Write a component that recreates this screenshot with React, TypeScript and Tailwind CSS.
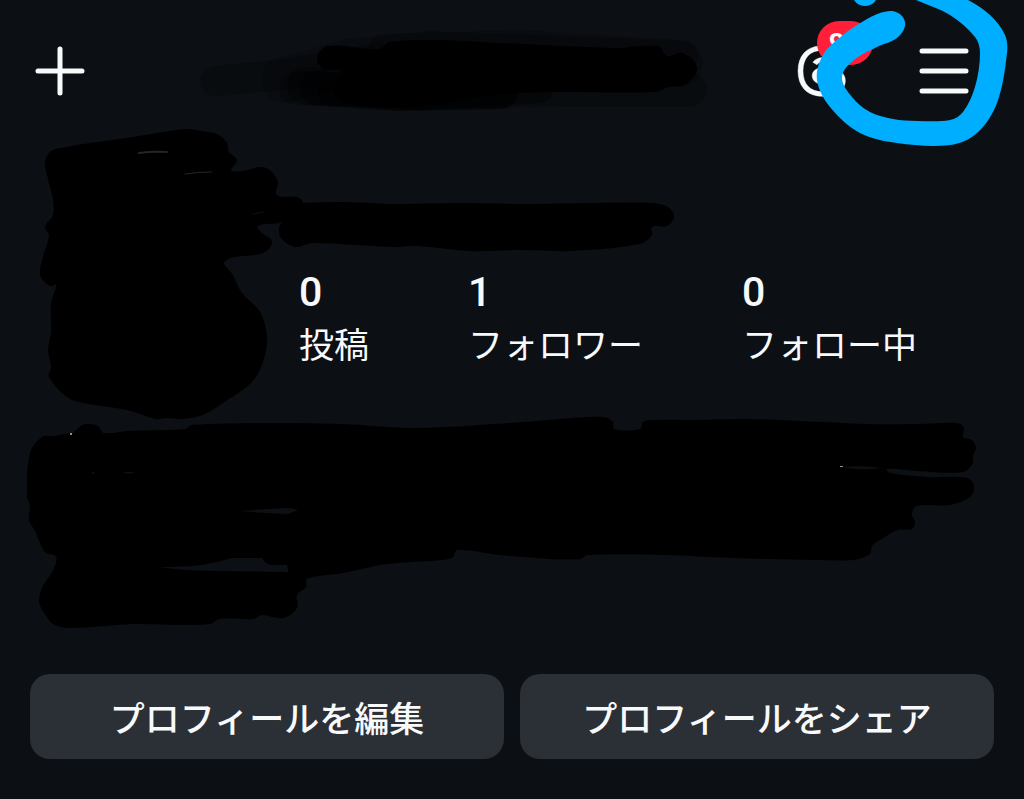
import React from "react";
import { FaThreads } from "react-icons/fa6";

type Point = [number, number];

/** Closed, slightly rounded outline through a list of points. */
function blob(points: Point[]): string {
  const n = points.length;
  let d = `M${points[0][0]} ${points[0][1]}`;
  for (let i = 0; i < n; i++) {
    const p0 = points[(i - 1 + n) % n];
    const p1 = points[i];
    const p2 = points[(i + 1) % n];
    const p3 = points[(i + 2) % n];
    const len = Math.hypot(p2[0] - p1[0], p2[1] - p1[1]);
    const a = Math.hypot(p2[0] - p0[0], p2[1] - p0[1]) || 1;
    const b = Math.hypot(p3[0] - p1[0], p3[1] - p1[1]) || 1;
    const k = len / 3;
    const c1 = [p1[0] + ((p2[0] - p0[0]) / a) * k, p1[1] + ((p2[1] - p0[1]) / a) * k];
    const c2 = [p2[0] - ((p3[0] - p1[0]) / b) * k, p2[1] - ((p3[1] - p1[1]) / b) * k];
    d += `C${c1[0].toFixed(1)} ${c1[1].toFixed(1)} ${c2[0].toFixed(1)} ${c2[1].toFixed(1)} ${p2[0]} ${p2[1]}`;
  }
  return d + "Z";
}

const TITLE: Point[] = [
  [317, 58], [328, 46], [379, 49], [390, 42], [438, 40], [500, 43], [614, 48], [658, 46], [667, 56],
  [682, 53], [697, 68], [686, 84], [669, 87], [655, 92], [510, 93], [431, 105], [376, 107], [342, 101],
  [333, 89], [342, 72], [324, 69],
];

const AVATAR: Point[] = [
  [45, 162], [51, 151], [67, 147], [90, 143], [133, 137], [163, 132], [190, 129], [202, 131], [217, 134],
  [227, 143], [229, 152], [237, 160], [232, 171], [263, 167], [273, 173], [278, 183], [277, 195],
  [297, 197], [303, 202], [306, 215], [280, 223], [258, 226], [262, 233], [272, 242], [263, 253],
  [225, 261], [233, 275], [242, 293], [260, 312], [267, 337], [263, 362], [252, 382], [223, 403],
  [203, 415], [183, 419], [167, 418], [155, 419], [127, 410], [83, 403], [67, 397], [49, 377], [51, 367],
  [48, 350], [51, 332], [51, 303], [56, 285], [50, 286], [40, 275], [43, 257], [49, 235], [45, 227],
  [53, 215], [53, 200], [47, 175],
];

const NAME: Point[] = [
  [290, 206], [303, 203], [350, 202], [393, 204], [457, 203], [530, 204], [590, 203], [650, 203],
  [668, 207], [674, 217], [667, 226], [652, 227], [652, 235], [640, 244], [570, 251], [523, 250],
  [470, 251], [417, 246], [393, 247], [313, 243], [295, 247], [281, 238], [279, 228], [282, 222],
];

const BIO: Point[] = [
  [27, 497], [30, 453], [42, 437], [53, 436], [70, 433], [73, 433], [82, 425], [90, 424], [98, 426],
  [104, 433], [127, 431], [185, 429], [192, 425], [260, 423], [343, 424], [413, 428], [510, 423],
  [560, 419], [603, 417], [613, 422], [614, 429], [640, 429], [643, 422], [653, 420], [693, 420],
  [747, 419], [800, 421], [867, 424], [917, 424], [957, 423], [964, 428], [963, 437], [972, 440],
  [976, 448], [973, 456], [973, 463], [963, 472], [917, 471], [887, 469], [890, 473], [927, 477],
  [967, 478], [974, 487], [970, 497], [950, 505], [917, 506], [912, 514], [915, 522], [912, 529],
  [898, 530], [880, 540], [872, 546], [870, 554], [853, 560], [817, 560], [733, 558], [667, 555],
  [588, 555], [580, 559], [550, 559], [500, 555], [457, 550], [453, 557], [443, 560], [387, 564],
  [343, 573], [307, 579], [306, 587], [297, 595], [297, 608], [283, 618], [262, 615], [253, 619],
  [220, 619], [210, 624], [183, 625], [133, 624], [70, 628], [53, 624], [45, 614], [39, 602], [42, 588],
  [53, 570], [56, 557], [45, 552], [35, 531], [29, 520], [30, 505],
];

const MARKER: Point[] = [
  [892, 11], [902, 16], [905, 26], [897, 38], [877, 47], [854, 60], [842, 77], [852, 97], [870, 112],
  [893, 119], [917, 121], [950, 120], [963, 112], [975, 87], [980, 53], [975, 37], [950, 15], [916, 0],
  [900, -8], [950, -8], [968, 0], [990, 15], [1005, 35], [1007, 53], [997, 103], [977, 133], [950, 145],
  [897, 143], [860, 133], [830, 107], [817, 80], [823, 55], [843, 35], [867, 19], [880, 13],
];

const STATS = [
  { value: "0", label: "投稿" },
  { value: "1", label: "フォロワー" },
  { value: "0", label: "フォロー中" },
];

const ACTIONS = ["プロフィールを編集", "プロフィールをシェア"];

function Header() {
  return (
    <header className="relative flex h-[126px] items-center justify-between pt-4 pr-[50px] pl-[30px]">
      <button type="button" aria-label="作成" className="size-[60px] shrink-0">
        <svg viewBox="0 0 60 60" className="size-full" stroke="#f8f9fb" strokeWidth="5" strokeLinecap="round">
          <path d="M8 30H52M30 8V52" />
        </svg>
      </button>

      <svg viewBox="173 24 540 94" className="h-[94px] w-[540px] min-w-0 overflow-visible" aria-hidden="true">
        <g fill="none" stroke="#000" strokeLinecap="round" strokeLinejoin="round">
          <path d="M216 81L290 74L380 58" strokeWidth="31" opacity=".22" />
          <path d="M284 80L350 62L430 54L680 64" strokeWidth="46" opacity=".2" />
          <path d="M296 88L420 92L560 90L690 90" strokeWidth="34" opacity=".22" />
          <path d="M306 86L400 92L500 90" strokeWidth="38" opacity=".3" />
          <path d="M316 88L400 94L500 92" strokeWidth="34" opacity=".4" />
          <path d="M330 92L420 97L540 90" strokeWidth="26" opacity=".4" />
          <path d="M384 50L520 46L682 56" strokeWidth="32" opacity=".2" />
        </g>
        <path d={blob(TITLE)} fill="#000" />
      </svg>

      <div className="flex shrink-0 items-center gap-[38px]">
        <button type="button" aria-label="Threads" className="relative flex h-[60px] w-20 items-center text-[#f8f9fb]">
          <FaThreads
            preserveAspectRatio="none"
            strokeWidth={4}
            stroke="currentColor"
            className="h-[54px] w-[54px] overflow-visible"
          />
          <span className="absolute -top-5 left-[21px] flex h-11 w-14 items-center justify-center rounded-full bg-[#ff1f38] font-['Liberation_Sans',sans-serif] text-[28px] leading-none font-bold">
            9+
          </span>
        </button>
        <button type="button" aria-label="メニュー" className="size-[60px]">
          <svg viewBox="0 0 60 60" className="size-full" stroke="#f8f9fb" strokeWidth="5" strokeLinecap="round">
            <path d="M8 10H52M8 30H52M8 50H52" />
          </svg>
        </button>
      </div>

      <svg
        viewBox="780 0 244 160"
        className="pointer-events-none absolute top-0 right-0 h-40 w-[244px]"
        fill="#00aeff"
        aria-hidden="true"
      >
        <path d={blob(MARKER)} />
        <circle cx="865" cy="-7" r="13" />
      </svg>
    </header>
  );
}

function Profile() {
  return (
    <section className="flex h-[294px] pl-10">
      <svg viewBox="40 126 239 294" className="h-[294px] w-[239px] shrink-0 overflow-visible" aria-hidden="true">
        <path d={blob(AVATAR)} fill="#000" />
        <g fill="none" stroke="#20262b" strokeLinecap="round">
          <path d="M139 153Q153 151 167 152" strokeWidth="2" />
          <path d="M185 174Q198 172 212 172" strokeWidth="1" />
          <path d="M253 214L263 212" stroke="#0c1014" strokeWidth="1" />
        </g>
      </svg>
      <div className="flex flex-col pt-[74px]">
        <svg viewBox="279 200 396 52" className="h-[52px] w-[396px] overflow-visible" aria-hidden="true">
          <path d={blob(NAME)} fill="#000" />
        </svg>
        <dl className="flex gap-[99px] pt-4 pl-5">
          {STATS.map((s) => (
            <div key={s.label} className="flex flex-col-reverse">
              <dt className="text-[35px] leading-[52px] whitespace-nowrap">{s.label}</dt>
              <dd className="font-[Roboto,sans-serif] text-[41px] leading-[49px] font-medium">{s.value}</dd>
            </div>
          ))}
        </dl>
      </div>
    </section>
  );
}

function Bio() {
  return (
    <svg viewBox="0 420 1024 216" className="block w-full overflow-visible" aria-hidden="true">
      <path d={blob(BIO)} fill="#000" />
      <g fill="#0c1014">
        <path d="M240 511L286 508Q292 508 298 510L288 514Q262 513 240 511Z" />
        <path d="M159 567Q185 567 202 565Q218 562 232 558H262Q266 565 272 565H287Q287 569 289 572L223 571Q185 571 159 567Z" />
        <path d="M91 472H95L93 474ZM123 472H135Q129 475 123 472ZM841 467Q862 465 882 468Q860 471 841 467Z" />
      </g>
      <g fill="#8d9194">
        <rect x="70" y="433" width="2" height="2" />
        <rect x="840" y="466" width="3" height="1" />
      </g>
    </svg>
  );
}

export default function App() {
  return (
    <main
      lang="ja"
      className="min-h-screen overflow-x-hidden bg-[#0c1014] font-['Noto_Sans_CJK_JP',sans-serif] text-[#f8f9fb]"
    >
      <Header />
      <Profile />
      <Bio />
      <div className="grid grid-cols-2 gap-4 px-[30px] pt-[38px] pb-10">
        {ACTIONS.map((label) => (
          <button
            key={label}
            type="button"
            className="h-[85px] rounded-[20px] bg-[#2b2f36] text-[35px] leading-[52px] font-medium whitespace-nowrap"
          >
            {label}
          </button>
        ))}
      </div>
    </main>
  );
}
